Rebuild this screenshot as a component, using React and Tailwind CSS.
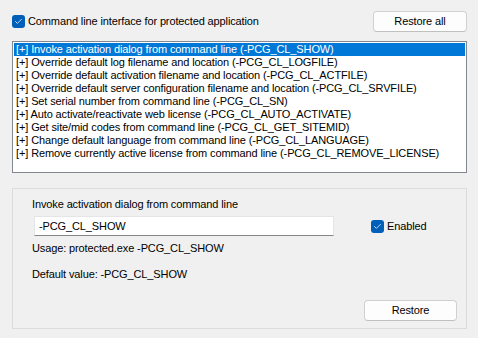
import { Check } from 'lucide-react';

const items = [
  'Invoke activation dialog from command line (-PCG_CL_SHOW)',
  'Override default log filename and location (-PCG_CL_LOGFILE)',
  'Override default activation filename and location (-PCG_CL_ACTFILE)',
  'Override default server configuration filename and location (-PCG_CL_SRVFILE)',
  'Set serial number from command line (-PCG_CL_SN)',
  'Auto activate/reactivate web license (-PCG_CL_AUTO_ACTIVATE)',
  'Get site/mid codes from command line (-PCG_CL_GET_SITEMID)',
  'Change default language from command line (-PCG_CL_LANGUAGE)',
  'Remove currently active license from command line (-PCG_CL_REMOVE_LICENSE)',
];

function CheckBox({ className = '' }) {
  return (
    <span className={`w-[13px] h-[13px] rounded-[3px] bg-[#005fb8] flex items-center justify-center shrink-0 ${className}`}>
      <Check className="w-[9px] h-[9px] text-white" strokeWidth={2} />
    </span>
  );
}

function WinButton({ children, className = '' }) {
  return (
    <button className={`h-[21px] rounded-[4px] border border-[#d0d0d0] border-b-[#c0c0c0] bg-[#fdfdfd] text-[11px] tracking-[-0.12px] text-black leading-none ${className}`}>
      {children}
    </button>
  );
}

export default function App() {
  return (
    <div className="w-[478px] h-[338px] bg-[#f0f0f0] text-[11px] tracking-[-0.12px] text-black flex flex-col px-[12px] overflow-hidden"
      style={{ fontFamily: '"Segoe UI", "Liberation Sans", sans-serif' }}>

      {/* Top row */}
      <div className="flex items-center justify-between mt-[11px] h-[21px]">
        <label className="flex items-center gap-[3px]">
          <CheckBox />
          <span>Command line interface for protected application</span>
        </label>
        <WinButton className="w-[94px] mr-[-1px]">Restore all</WinButton>
      </div>

      {/* List */}
      <div className="mt-[9px] h-[132px] border border-[#828790] bg-white p-[1px] w-[455px]">
        {items.map((t, i) => (
          <div key={i}
            className={`h-[13px] leading-[13px] pl-[2px] whitespace-nowrap ${i === 0 ? 'bg-[#0078d7] text-white' : 'text-black'}`}>
            [+] {t}
          </div>
        ))}
      </div>

      {/* Details group */}
      <div className="mt-[15px] h-[141px] w-[455px] border border-[#dcdcdc] flex flex-col pl-[19px] pr-[9px]">
        <div className="mt-[7px] leading-[16px]">Invoke activation dialog from command line</div>
        <div className="flex items-center mt-[4px]">
          <div className="w-[300px] h-[20px] ml-[2px] bg-white border border-[#e5e5e5] border-b-[#868686] flex items-center pl-[4px]">
            -PCG_CL_SHOW
          </div>
          <label className="flex items-center gap-[3px] ml-[37px]">
            <CheckBox />
            <span>Enabled</span>
          </label>
        </div>
        <div className="mt-[4px] leading-[16px]">Usage: protected.exe -PCG_CL_SHOW</div>
        <div className="mt-[10px] leading-[16px]">Default value: -PCG_CL_SHOW</div>
        <div className="flex justify-end mt-[18px]">
          <WinButton className="w-[93px]">Restore</WinButton>
        </div>
      </div>
    </div>
  );
}
